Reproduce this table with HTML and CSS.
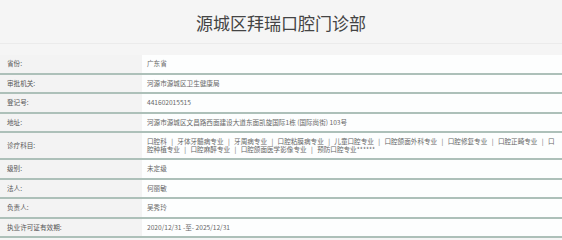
FILE: index.html
```html
<!DOCTYPE html>
<html lang="zh-CN">
<head>
<meta charset="utf-8">
<title>源城区拜瑞口腔门诊部</title>
<link rel="stylesheet" href="styles.css">
</head>
<body>
<div class="page">
  <h1 class="title">源城区拜瑞口腔门诊部</h1>
  <table class="info">
    <tr><th>省份:</th><td>广东省</td></tr>
    <tr><th>审批机关:</th><td>河源市源城区卫生健康局</td></tr>
    <tr><th>登记号:</th><td>441602015515</td></tr>
    <tr><th>地址:</th><td>河源市源城区文昌路西面建设大道东面凯旋国际1栋 (国际尚街) 103号</td></tr>
    <tr><th>诊疗科目:</th><td class="wrap">口腔科<span class="sep">|</span>牙体牙髓病专业<span class="sep">|</span>牙周病专业<span class="sep">|</span>口腔粘膜病专业<span class="sep">|</span>儿童口腔专业<span class="sep">|</span>口腔颌面外科专业<span class="sep">|</span>口腔修复专业<span class="sep">|</span>口腔正畸专业<span class="sep">|</span>口腔种植专业<span class="sep">|</span>口腔麻醉专业<span class="sep">|</span>口腔颌面医学影像专业<span class="sep">|</span>预防口腔专业******</td></tr>
    <tr><th>级别:</th><td>未定级</td></tr>
    <tr><th>法人:</th><td>何丽敏</td></tr>
    <tr><th>负责人:</th><td>吴秀玲</td></tr>
    <tr><th>执业许可证有效期:</th><td>2020/12/31 -至- 2025/12/31</td></tr>
  </table>
</div>
</body>
</html>
```
FILE: styles.css
```css
html, body {
  margin: 0;
  padding: 0;
  background: #f5f5f5;
}
body {
  font-family: "Noto Sans CJK SC", "Noto Sans", sans-serif;
  width: 562px;
  height: 240px;
  overflow: hidden;
}
.page {
  display: flex;
  flex-direction: column;
}
.title {
  margin: 0 0 11px;
  height: 44px;
  border-bottom: 1px solid #ebebeb;
  box-sizing: border-box;
  font-size: 17px;
  font-weight: normal;
  color: #444;
  display: flex;
  align-items: center;
  justify-content: center;
  padding-top: 2px;
}
.info {
  width: 562px;
  border-collapse: collapse;
  table-layout: fixed;
  font-size: 6.6px;
  line-height: 7.5px;
}
.info th, .info td {
  padding: 5px 4px 5px 7px;
  border-bottom: 2px solid #adc0b9;
  text-align: left;
  font-weight: normal;
  vertical-align: middle;
}
.info th {
  width: 131px;
  background: #f3f3f3;
  color: #555;
}
.info td {
  padding-left: 5px;
  background: #fdfefe;
  color: #666;
}
.wrap {
  word-break: break-all;
}
.sep {
  margin: 0 4.4px;
}
```
